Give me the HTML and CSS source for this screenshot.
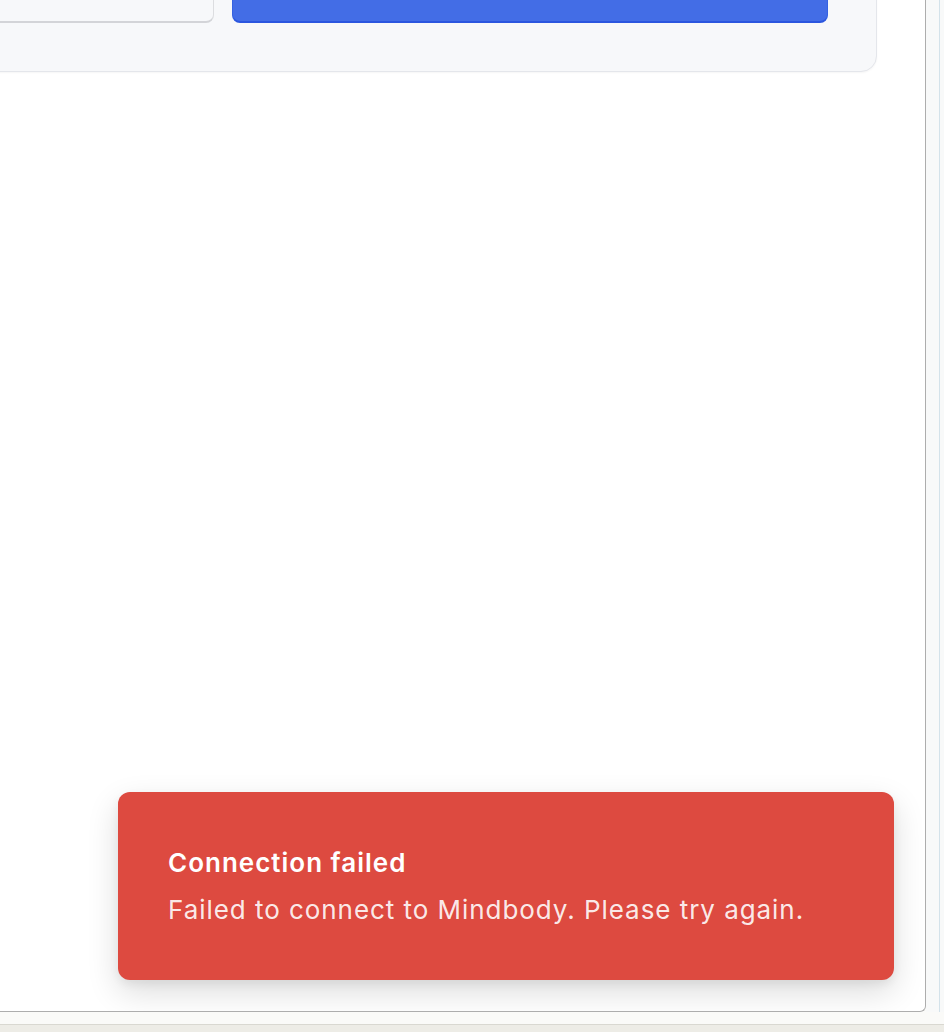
FILE: index.html
```html
<!DOCTYPE html>
<html lang="en">
<head>
<meta charset="utf-8">
<title>Connect Mindbody</title>
<link rel="stylesheet" href="styles.css">
</head>
<body>
<div class="shell">
  <div class="window">
    <div class="frame">
      <div class="card">
        <div class="actions">
          <button class="btn btn-secondary">Cancel</button>
          <button class="btn btn-primary">Log in and authorize Mindbody</button>
        </div>
      </div>
      <div class="toast" role="alert">
        <div class="toast-title">Connection failed</div>
        <div class="toast-desc">Failed to connect to Mindbody. Please try again.</div>
      </div>
    </div>
    <div class="gutter"><div class="gutter-line"></div></div>
  </div>
  <div class="statusbar"></div>
</div>
</body>
</html>
```

FILE: styles.css
```css
html, body {
  margin: 0;
  padding: 0;
  height: 100%;
  overflow: hidden;
}
body {
  background: #fafaf8;
  font-family: Inter, "Noto Sans", sans-serif;
}
.shell {
  display: flex;
  flex-direction: column;
  height: 1032px;
}
.window {
  display: flex;
  height: 1012px;
}
.frame {
  position: relative;
  width: 925px;
  height: 1011px;
  background: #ffffff;
  border-right: 1px solid #adadad;
  border-bottom: 1px solid #adadad;
  border-bottom-right-radius: 6px;
  overflow: hidden;
  flex: 0 0 auto;
}
.gutter {
  flex: 1;
  background: #f8f9f9;
  display: flex;
  padding-left: 13px;
}
.gutter-line {
  width: 1px;
  background: #d3e2ea;
}
.statusbar {
  height: 12px;
  background: #fafaf8;
  border-bottom: 1px solid #d9d8d1;
  flex: 0 0 auto;
}
.shell::after {
  content: "";
  display: block;
  flex: 1;
  background: #edece6;
}
.card {
  margin-top: -100px;
  margin-left: -120px;
  margin-right: 48px;
  background: #f7f8fa;
  border: 1px solid #e4e6eb;
  border-radius: 16px;
  padding: 48px;
  box-shadow: 0 1px 2px rgba(0, 0, 0, 0.04);
}
.actions {
  display: flex;
  gap: 18px;
  height: 74px;
}
.btn {
  box-sizing: border-box;
  height: 74px;
  border-radius: 8px;
  font-family: Inter, "Noto Sans", sans-serif;
  font-size: 26px;
  font-weight: 600;
  letter-spacing: 0.9px;
  padding: 0 24px;
}
.btn-secondary {
  flex: 0 0 285px;
  background: #f7f8fa;
  border: 1px solid #dcdde0;
  border-bottom: 2px solid #d3d4d8;
  color: #1f2937;
}
.btn-primary {
  flex: 1;
  background: #436de6;
  border: 1px solid #3562e2;
  border-bottom: 2px solid #2b56df;
  color: #ffffff;
  padding-top: 0;
  padding-bottom: 4px;
}
.toast {
  position: absolute;
  right: 31px;
  bottom: 31px;
  width: 776px;
  height: 188px;
  box-sizing: border-box;
  background: #dd4a40;
  border-radius: 12px;
  padding: 55px 48px 0 50px;
  box-shadow: 0 12px 32px rgba(0, 0, 0, 0.14), 0 4px 10px rgba(0, 0, 0, 0.06);
  display: flex;
  flex-direction: column;
  gap: 15px;
}
.toast-title {
  color: #ffffff;
  font-size: 26px;
  line-height: 32px;
  font-weight: 600;
  letter-spacing: 1px;
}
.toast-desc {
  color: rgba(255, 255, 255, 0.9);
  font-size: 26px;
  line-height: 32px;
  font-weight: 400;
  letter-spacing: 0.95px;
}
```
